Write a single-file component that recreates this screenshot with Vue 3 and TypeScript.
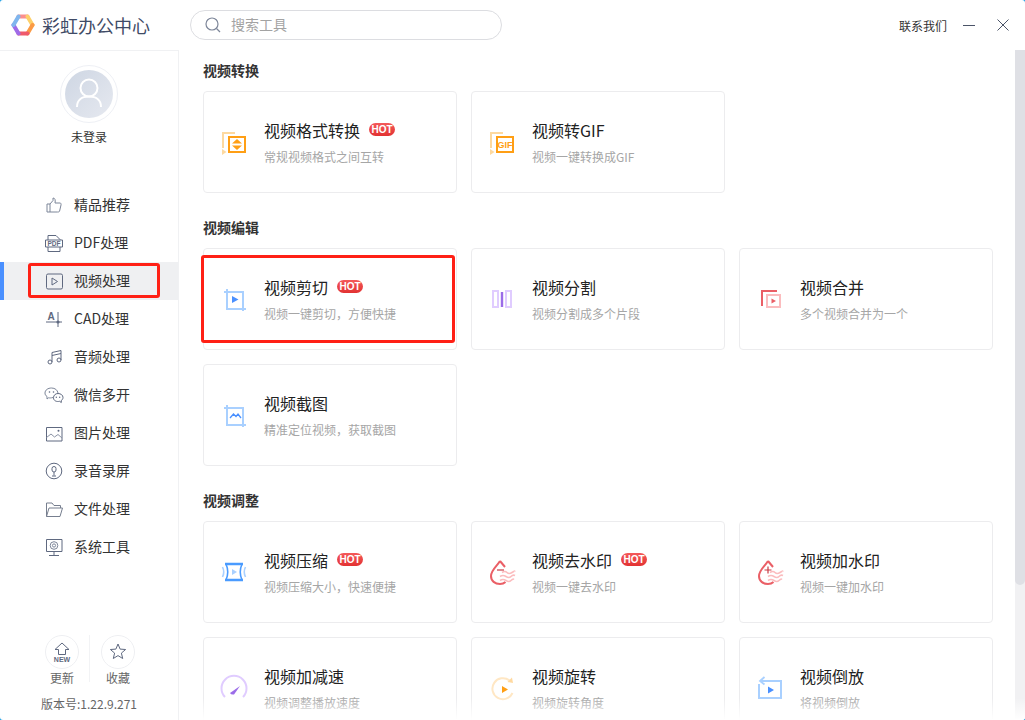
<script setup lang="ts">
interface Shape {
  d: string
  c?: string
  f?: string
  w?: number
}
interface Label {
  t: string
  x: number
  y: number
  s: number
  c: string
}
interface Icon {
  shapes: Shape[]
  label?: Label
}
interface Tool {
  title: string
  sub: string
  icon: Icon
  hot?: boolean
}
interface Section {
  name: string
  tools: Tool[]
}

const ORANGE = '#ff9f15'
const ORANGE_L = '#fdd9a0'
const BLUE = '#4a90ff'
const BLUE_L = '#a9d0ff'
const PURPLE = '#9b6ce8'
const PURPLE_L = '#e0ccff'
const RED = '#ea5f66'
const RED_L = '#fbbcbe'
const NAV = '#5f6980'

const circle = (x: number, y: number, r: number) =>
  `M${x - r} ${y}a${r} ${r} 0 1 0 ${r * 2} 0a${r} ${r} 0 1 0 ${-r * 2} 0Z`

const dropShapes: Shape[] = [
  { d: 'M13 5C10 10 4 14 4 20C4 25 8 28 13 28C15 28 17 27.4 18.5 26', c: RED, w: 2 },
  { d: 'M13 5L18 11', c: RED, w: 2 },
  { d: 'M15 16.5q3 -2 5 0t5 0t3 -1', c: RED_L, w: 1.6 },
  { d: 'M13 20.5q3 -2 6 0t5 0t4 -1', c: RED_L, w: 1.6 },
  { d: 'M13 24.5q3 -2 6 0t5 0t3 -1', c: RED_L, w: 1.6 },
]

const sections: Section[] = [
  {
    name: '视频转换',
    tools: [
      {
        title: '视频格式转换',
        sub: '常规视频格式之间互转',
        hot: true,
        icon: {
          shapes: [
            { d: 'M4 22V7H16', c: ORANGE_L, w: 2 },
            { d: 'M3 23L7.5 26L3 29Z', f: ORANGE_L },
            { d: 'M10 11H26V26H10Z', c: ORANGE, w: 2 },
            { d: 'M18 13L23 17.5H13Z', f: ORANGE },
            { d: 'M13 19.5H23L18 24Z', f: ORANGE },
          ],
        },
      },
      {
        title: '视频转GIF',
        sub: '视频一键转换成GIF',
        icon: {
          shapes: [
            { d: 'M4 22V7H16', c: ORANGE_L, w: 2 },
            { d: 'M3 23L7.5 26L3 29Z', f: ORANGE_L },
            { d: 'M10 11H26V26H10Z', c: ORANGE, w: 2 },
          ],
          label: { t: 'GIF', x: 18, y: 22, s: 9, c: ORANGE },
        },
      },
    ],
  },
  {
    name: '视频编辑',
    tools: [
      {
        title: '视频剪切',
        sub: '视频一键剪切，方便快捷',
        hot: true,
        icon: {
          shapes: [
            { d: 'M5 9H24V28', c: BLUE_L, w: 2 },
            { d: 'M8 6V26H27', c: BLUE_L, w: 2 },
            { d: 'M13 13L19.5 16.5L13 20Z', f: BLUE },
          ],
        },
      },
      {
        title: '视频分割',
        sub: '视频分割成多个片段',
        icon: {
          shapes: [
            { d: 'M6 8H11V24H6Z', c: PURPLE_L, w: 2 },
            { d: 'M19 8H24V24H19Z', c: PURPLE_L, w: 2 },
            { d: 'M15 9V24', c: PURPLE, w: 2.4 },
          ],
        },
      },
      {
        title: '视频合并',
        sub: '多个视频合并为一个',
        icon: {
          shapes: [
            { d: 'M7 23V8H22', c: RED, w: 2 },
            { d: 'M12 12H25V24H12Z', c: RED_L, w: 2 },
            { d: 'M16.5 15.5L21 18L16.5 20.5Z', f: RED },
          ],
        },
      },
      {
        title: '视频截图',
        sub: '精准定位视频，获取截图',
        icon: {
          shapes: [
            { d: 'M5 9H24V28', c: BLUE_L, w: 2 },
            { d: 'M8 6V26H27', c: BLUE_L, w: 2 },
            { d: 'M11 19L14.5 15L17 17.5L19 15L22 19', c: BLUE, w: 1.3 },
          ],
        },
      },
    ],
  },
  {
    name: '视频调整',
    tools: [
      {
        title: '视频压缩',
        sub: '视频压缩大小，快速便捷',
        hot: true,
        icon: {
          shapes: [
            { d: 'M6 8H24M6 24H24', c: '#4a9bff', w: 2.6 },
            { d: 'M7 8Q10.5 16 7 24M23 8Q19.5 16 23 24', c: '#4a9bff', w: 1.6 },
            { d: 'M3.5 11Q6 16 3.5 21', c: BLUE_L, w: 1.6 },
            { d: 'M26.5 11Q24 16 26.5 21', c: BLUE_L, w: 1.6 },
            { d: 'M13 13L18 16L13 19Z', f: BLUE_L },
          ],
        },
      },
      {
        title: '视频去水印',
        sub: '视频一键去水印',
        hot: true,
        icon: { shapes: [...dropShapes, { d: 'M10 14H17', c: '#c93a43', w: 1.2 }] },
      },
      {
        title: '视频加水印',
        sub: '视频一键加水印',
        icon: { shapes: [...dropShapes, { d: 'M9.5 14H16.5M13 10.5V17.5', c: '#c93a43', w: 1.2 }] },
      },
      {
        title: '视频加减速',
        sub: '视频调整播放速度',
        icon: {
          shapes: [
            { d: 'M6 25A12.5 12.5 0 1 1 24 25', c: PURPLE_L, w: 2 },
            { d: 'M11 21L21 14L15 22.5Q12 23 11 21Z', f: PURPLE },
          ],
        },
      },
      {
        title: '视频旋转',
        sub: '视频旋转角度',
        icon: {
          shapes: [
            { d: 'M22.5 8.5A10.5 10.5 0 1 0 25.5 21', c: '#ffe7c4', w: 2 },
            { d: 'M20.5 10L25 5.5L26 11Z', f: '#ffd9a0' },
            { d: 'M15 14L21 17.5L15 21Z', f: ORANGE },
          ],
        },
      },
      {
        title: '视频倒放',
        sub: '将视频倒放',
        icon: {
          shapes: [
            { d: 'M5 9H26V26H4V12', c: BLUE_L, w: 2 },
            { d: 'M9.5 5L5 9L9.5 12.5', c: BLUE_L, w: 1.8 },
            { d: 'M13 14.5L19 18L13 21.5Z', f: BLUE },
          ],
        },
      },
    ],
  },
]

const navItems: { name: string; active?: boolean; icon: Icon }[] = [
  {
    name: '精品推荐',
    icon: {
      shapes: [
        {
          d: 'M3 9H6V17H3ZM6 9L9 5.5V3C11 3 11.6 5 11 8H16C17 8 17.2 9 17 10L15.6 16C15.3 17 14.4 17 13.5 17H6',
          c: '#7d8699',
          w: 1,
        },
      ],
    },
  },
  {
    name: 'PDF处理',
    icon: {
      shapes: [
        { d: 'M4 7V2.5H12L16 6.5V7M4 14V18.5H16V14', c: NAV, w: 1 },
        { d: 'M1.5 7H18.5V14H1.5Z', c: NAV, w: 1 },
      ],
      label: { t: 'PDF', x: 10, y: 12.8, s: 6.5, c: NAV },
    },
  },
  {
    name: '视频处理',
    active: true,
    icon: {
      shapes: [
        { d: 'M4 3H17Q18.5 3 18.5 4.5V16.5Q18.5 18 17 18H4Q2.5 18 2.5 16.5V4.5Q2.5 3 4 3Z', c: NAV, w: 1 },
        { d: 'M8 7L13.5 10.5L8 14Z', c: NAV, w: 1 },
      ],
    },
  },
  {
    name: 'CAD处理',
    icon: {
      shapes: [
        { d: 'M2 13H18M14 3V18', c: NAV, w: 1 },
        { d: circle(14, 13, 1.6), f: NAV },
      ],
      label: { t: 'A', x: 7, y: 11, s: 10, c: NAV },
    },
  },
  {
    name: '音频处理',
    icon: {
      shapes: [
        { d: 'M8 15V5.5L17 3.5V13M8 8.5L17 6.5', c: NAV, w: 1 },
        { d: circle(6, 15, 2), c: NAV, w: 1 },
        { d: circle(15, 13, 2), c: NAV, w: 1 },
      ],
    },
  },
  {
    name: '微信多开',
    icon: {
      shapes: [
        { d: 'M9 12.5C7 13 5.500 13 4.500 12.800L3 14V11.500C1.500 10.500 1 9.500 1 8C1 5 4 3 7.500 3C11 3 13.500 5 14 8', c: '#7d8699', w: 1 },
        { d: 'M14 8.500C16.800 8.500 19 10.200 19 12.500C19 13.800 18.300 14.800 17.300 15.500V17.500L15.500 16.300C13 17 9.500 16 9.500 12.800C9.500 10.200 11.500 8.500 14 8.500Z', c: NAV, w: 1 },
        { d: circle(5.5, 7, 0.8) + circle(9.5, 7, 0.8) + circle(12.3, 12.3, 0.7) + circle(15.7, 12.3, 0.7), f: NAV },
      ],
    },
  },
  {
    name: '图片处理',
    icon: {
      shapes: [
        { d: 'M2.500 4.500H18V18H2.500Z', c: NAV, w: 1 },
        { d: 'M2.500 14.500L7 11L10.500 14L14 11.500L18 15', c: '#8b93a5', w: 1 },
        { d: circle(14.5, 7.8, 1), f: NAV },
      ],
    },
  },
  {
    name: '录音录屏',
    icon: {
      shapes: [
        { d: circle(10, 10, 7.8), c: NAV, w: 1 },
        { d: 'M8 7.500Q8 5.500 10 5.500Q12 5.500 12 7.500V9Q12 11 10 11Q8 11 8 9ZM10 11V14.500M8 15H12', c: NAV, w: 1 },
      ],
    },
  },
  {
    name: '文件处理',
    icon: {
      shapes: [
        { d: 'M2.500 17.500V4H8L10 6.500H16.500V9', c: '#777f8f', w: 1 },
        { d: 'M2.500 17.500H16L18.500 9H5Z', c: '#777f8f', w: 1 },
      ],
    },
  },
  {
    name: '系统工具',
    icon: {
      shapes: [
        { d: 'M2.500 2.500H18V14.500H2.500Z', c: NAV, w: 1 },
        { d: 'M10 15V18M5 18.500H15', c: NAV, w: 1 },
        { d: circle(10, 8.500, 3.800), c: '#7d8699', w: 1 },
        { d: circle(10, 8.500, 1.600), c: '#7d8699', w: 1 },
      ],
    },
  },
]
</script>

<template>
  <div class="window">
    <header class="topbar">
      <div class="brand">
        <svg class="logo" width="24" height="24" viewBox="0 0 24 24" fill="none" stroke-width="4" stroke-linecap="round">
          <path d="M7.500 3.500H16.500" stroke="#fb8f8f" />
          <path d="M16.500 3.500L21.500 12" stroke="#fdd06a" />
          <path d="M21.500 12L16.500 20.500" stroke="#fb9a45" />
          <path d="M16.500 20.500H7.500" stroke="#ef5a6b" />
          <path d="M7.500 20.500L2.500 12" stroke="#9f6be8" />
          <path d="M2.500 12L7.500 3.500" stroke="#7fb6ee" />
        </svg>
        <span class="brand-name">彩虹办公中心</span>
      </div>
      <div class="search">
        <svg width="16" height="16" viewBox="0 0 16 16" fill="none" stroke="#7d8699" stroke-width="1.200">
          <circle cx="7" cy="7" r="6" />
          <path d="M11.500 11.500L15 15" />
        </svg>
        <span class="search-text">搜索工具</span>
      </div>
      <div class="win-actions">
        <span class="contact">联系我们</span>
        <svg width="12" height="12" viewBox="0 0 12 12" stroke="#4b5468" stroke-width="1">
          <path d="M0 6.500H12" />
        </svg>
        <svg width="12" height="12" viewBox="0 0 12 12" stroke="#4b5468" stroke-width="1" fill="none">
          <path d="M0.500 0.500L11.500 11.500M11.500 0.500L0.500 11.500" />
        </svg>
      </div>
    </header>

    <div class="body">
      <aside class="sidebar">
        <div class="avatar">
          <div class="avatar-inner">
            <svg width="48" height="48" viewBox="0 0 48 48" fill="none" stroke="#fff" stroke-width="2">
              <circle cx="24" cy="18" r="8.500" />
              <path d="M12 37C12 30 17 26.500 24 26.500C31 26.500 36 30 36 37" />
            </svg>
          </div>
        </div>
        <div class="user-name">未登录</div>

        <nav class="nav">
          <div v-for="item in navItems" :key="item.name" :class="['nav-item', { active: item.active }]">
            <svg class="nav-icon" width="20" height="20" viewBox="0 0 20 20">
              <path
                v-for="(s, i) in item.icon.shapes"
                :key="i"
                :d="s.d"
                :fill="s.f || 'none'"
                :stroke="s.c || 'none'"
                :stroke-width="s.w || 0"
              />
              <text
                v-if="item.icon.label"
                class="icon-label"
                :x="item.icon.label.x"
                :y="item.icon.label.y"
                :font-size="item.icon.label.s"
                :fill="item.icon.label.c"
              >{{ item.icon.label.t }}</text>
            </svg>
            <span class="nav-text">{{ item.name }}</span>
          </div>
        </nav>

        <div class="side-footer">
          <div class="foot-btns">
            <div class="foot-btn">
              <svg class="foot-icon" width="34" height="34" viewBox="0 0 34 34" fill="none">
                <circle cx="17" cy="17" r="16.500" stroke="#eeeff2" />
                <path d="M17 8L24 14.500H20.500V19.500H13.500V14.500H10Z" stroke="#5f6980" stroke-width="1" />
                <text class="icon-label" x="17" y="27" font-size="7" fill="#5f6980">NEW</text>
              </svg>
              <span>更新</span>
            </div>
            <div class="foot-btn second">
              <svg class="foot-icon" width="34" height="34" viewBox="0 0 34 34" fill="none">
                <circle cx="17" cy="17" r="16.500" stroke="#eeeff2" />
                <path d="M17 9L19.100 14.100L24.600 14.500L20.400 18.100L21.700 23.500L17 20.600L12.300 23.500L13.600 18.100L9.400 14.500L14.900 14.100Z" stroke="#5f6980" stroke-width="1" />
              </svg>
              <span>收藏</span>
            </div>
          </div>
          <div class="version">版本号:1.22.9.271</div>
        </div>
      </aside>

      <main class="content">
        <section v-for="sec in sections" :key="sec.name" class="section">
          <h3 class="section-title">{{ sec.name }}</h3>
          <div class="grid">
            <div v-for="tool in sec.tools" :key="tool.title" class="card">
              <svg class="card-icon" width="32" height="32" viewBox="0 0 32 32">
                <path
                  v-for="(s, i) in tool.icon.shapes"
                  :key="i"
                  :d="s.d"
                  :fill="s.f || 'none'"
                  :stroke="s.c || 'none'"
                  :stroke-width="s.w || 0"
                />
                <text
                  v-if="tool.icon.label"
                  class="icon-label"
                  :x="tool.icon.label.x"
                  :y="tool.icon.label.y"
                  :font-size="tool.icon.label.s"
                  :fill="tool.icon.label.c"
                >{{ tool.icon.label.t }}</text>
              </svg>
              <div class="card-text">
                <div class="card-title">
                  <span>{{ tool.title }}</span>
                  <em v-if="tool.hot" class="hot">HOT</em>
                </div>
                <div class="card-sub">{{ tool.sub }}</div>
              </div>
            </div>
          </div>
        </section>
      </main>

      <div class="scrollbar"><div class="thumb"></div></div>
    </div>

    <div class="fade"></div>
    <div class="mark mark-nav"></div>
    <div class="mark mark-card"></div>
  </div>
</template>

<style>
html,
body {
  margin: 0;
  background: #1c9fe6;
}
</style>

<style scoped>
.window {
  position: relative;
  width: 1025px;
  height: 720px;
  overflow: hidden;
  border-radius: 3px;
  background: #fff;
  display: flex;
  flex-direction: column;
  font-family: "Noto Sans CJK SC", "Noto Sans", sans-serif;
  color: #333;
}
.topbar {
  height: 50px;
  flex: none;
  display: flex;
  align-items: center;
}
.brand {
  width: 190px;
  flex: none;
  display: flex;
  align-items: center;
  padding-left: 11px;
  box-sizing: border-box;
}
.brand-name {
  margin-left: 7px;
  font-size: 18px;
  color: #3f4b66;
}
.search {
  width: 312px;
  height: 30px;
  box-sizing: border-box;
  border: 1px solid #dcdde1;
  border-radius: 15px;
  display: flex;
  align-items: center;
  gap: 10px;
  padding-left: 14px;
  font-size: 14px;
  color: #a3a3a3;
}
.search-text {
  padding-bottom: 2px;
}
.win-actions {
  margin-left: auto;
  padding-right: 16px;
  display: flex;
  align-items: center;
  gap: 22px;
}
.contact {
  font-size: 12px;
  color: #333;
  margin-right: -6px;
}
.body {
  flex: 1;
  min-height: 0;
  display: flex;
}
.sidebar {
  width: 179px;
  flex: none;
  box-sizing: border-box;
  border-top: 1px solid #f0f1f3;
  border-right: 1px solid #f0f1f3;
  display: flex;
  flex-direction: column;
  align-items: stretch;
}
.avatar {
  width: 58px;
  height: 58px;
  box-sizing: border-box;
  margin: 14px 0 0 60px;
  border: 1px solid #eef0f5;
  border-radius: 50%;
  display: flex;
  align-items: center;
  justify-content: center;
}
.avatar-inner {
  width: 48px;
  height: 48px;
  border-radius: 50%;
  background: linear-gradient(135deg, #ced6e3, #e6e9f0);
}
.avatar-inner svg {
  display: block;
}
.user-name {
  margin-top: 5px;
  text-align: center;
  font-size: 12px;
  line-height: 18px;
  color: #333;
}
.nav {
  margin-top: 40px;
}
.nav-item {
  height: 38px;
  box-sizing: border-box;
  padding-left: 44px;
  display: flex;
  align-items: center;
  font-size: 14px;
  color: #333;
}
.nav-item.active {
  background: #eff0f2;
  box-shadow: inset 4px 0 0 #4a90ff;
}
.nav-text {
  padding-bottom: 2px;
}
.nav-icon {
  margin-right: 10px;
  flex: none;
}
.icon-label {
  font-family: "Liberation Sans", sans-serif;
  font-weight: 700;
  text-anchor: middle;
}
.side-footer {
  margin-top: auto;
  height: 85px;
}
.foot-btns {
  display: flex;
  padding-left: 34px;
}
.foot-btn {
  width: 56px;
  height: 47px;
  display: flex;
  flex-direction: column;
  align-items: center;
  font-size: 12px;
  line-height: 18px;
  color: #666;
}
.foot-btn.second {
  box-shadow: -1px 0 0 #f2f3f5;
}
.foot-icon {
  display: block;
  flex: none;
}
.version {
  margin-top: 13px;
  text-align: center;
  font-size: 12px;
  line-height: 18px;
  color: #666;
}
.content {
  flex: 1;
  min-width: 0;
  overflow: hidden;
  padding: 11px 0 0 24px;
}
.section {
  margin-bottom: 25px;
}
.section-title {
  margin: 0 0 12px;
  font-size: 14px;
  line-height: 18px;
  font-weight: 700;
  color: #333;
}
.grid {
  display: grid;
  grid-template-columns: repeat(3, 254px);
  gap: 14px;
}
.card {
  height: 102px;
  box-sizing: border-box;
  border: 1px solid #ececee;
  border-radius: 4px;
  display: flex;
  align-items: center;
  padding-left: 15px;
}
.card-icon {
  flex: none;
  margin-right: 13px;
  overflow: visible;
}
.card-title {
  display: flex;
  align-items: center;
  height: 22px;
  font-size: 16px;
  line-height: 22px;
  color: #222;
}
.hot {
  margin: -1px 0 0 9px;
  width: 26px;
  height: 13px;
  border-radius: 7px;
  background: linear-gradient(#f4595a, #e23232);
  color: #fff;
  font-family: "Liberation Sans", sans-serif;
  font-style: normal;
  font-weight: 700;
  font-size: 10px;
  line-height: 13px;
  text-align: center;
}
.card-sub {
  margin-top: 7px;
  font-size: 12px;
  line-height: 18px;
  color: #a6a6a6;
}
.scrollbar {
  width: 10px;
  flex: none;
  background: #f1f1f3;
}
.thumb {
  height: 535px;
  background: #dfe0e5;
  border-radius: 0 0 5px 5px;
}
.fade {
  position: absolute;
  left: 179px;
  right: 0;
  bottom: 0;
  height: 22px;
  background: linear-gradient(rgba(255, 255, 255, 0), #fff);
}
.mark {
  position: absolute;
  box-sizing: border-box;
  border: 3px solid #ff2015;
  border-radius: 3px;
  pointer-events: none;
}
.mark-nav {
  left: 28px;
  top: 263px;
  width: 132px;
  height: 35px;
}
.mark-card {
  left: 201px;
  top: 255px;
  width: 254px;
  height: 88px;
}
</style>
